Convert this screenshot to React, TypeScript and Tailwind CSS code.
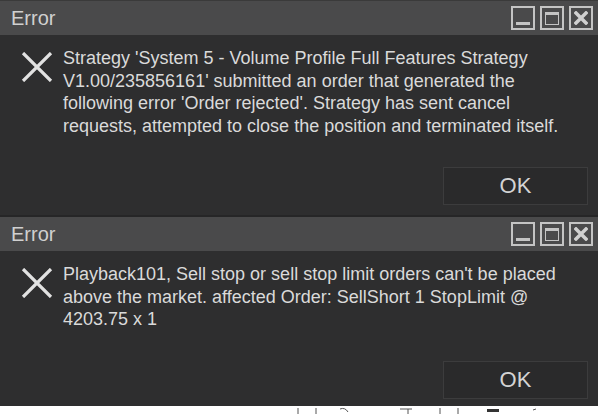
import { ReactNode } from 'react'

const TitleButtons = () => (
  <div className="flex gap-[5px] mr-[5px]">
    <div className="w-[24px] h-[24px] border-2 border-[#c4c4c4] flex items-end justify-center pb-[3px]">
      <div className="w-[14px] h-[3px] bg-[#c4c4c4]" />
    </div>
    <div className="w-[24px] h-[24px] border-2 border-[#c4c4c4] flex items-center justify-center">
      <div className="w-[14px] h-[13px] border border-t-[3px] border-[#c4c4c4]" />
    </div>
    <div className="w-[24px] h-[24px] border-2 border-[#c4c4c4] flex items-center justify-center">
      <svg width="14" height="14" viewBox="0 0 14 14">
        <path d="M2 2 L12 12 M12 2 L2 12" stroke="#d0d0d0" strokeWidth="3.5" strokeLinecap="square" />
      </svg>
    </div>
  </div>
)

const ErrorIcon = () => (
  <svg width="32" height="30" viewBox="0 0 32 30" className="shrink-0">
    <path d="M2 1 L30 29 M30 1 L2 29" stroke="#e2e2e2" strokeWidth="3.2" />
  </svg>
)

type DialogProps = {
  children: ReactNode
  bodyHeight: string
  okClass: string
}

const ErrorDialog = ({ children, bodyHeight, okClass }: DialogProps) => (
  <div className="flex flex-col bg-[#2e2e2f]">
    <div className="h-[34px] bg-[#4a4a4b] flex items-center justify-between">
      <span className="pl-[11px] text-[20px] text-[#d0d0d0] leading-none">Error</span>
      <TitleButtons />
    </div>
    <div className={`flex flex-col justify-between ${bodyHeight}`}>
      <div className="flex gap-[10px] pl-[21px] pt-[12px]">
        <div className="pt-[5px]">
          <ErrorIcon />
        </div>
        <p className="w-[524px] text-[18px] leading-[22.5px] text-[#dadada]">{children}</p>
      </div>
      <div className={`flex justify-end pr-[10px] ${okClass}`}>
        <button className="w-[145px] h-[38px] border border-[#3c3c3d] bg-[#2a2a2b] text-[22px] text-[#d4d4d4] leading-none">
          OK
        </button>
      </div>
    </div>
  </div>
)

const App = () => {
  return (
    <div
      className="w-[598px] h-[414px] bg-white flex flex-col overflow-hidden"
      style={{ fontFamily: '"Liberation Sans", Arial, sans-serif' }}
    >
      <div className="h-px bg-[#3a3a3a]" />
      <ErrorDialog bodyHeight="h-[180px]" okClass="pb-[10px]">
        Strategy 'System 5 - Volume Profile Full Features Strategy V1.00/235856161' submitted an order that
        generated the following error 'Order rejected'. Strategy has sent cancel requests, attempted to close the
        position and terminated itself.
      </ErrorDialog>
      <div className="h-[2px] bg-[#262627]" />
      <ErrorDialog bodyHeight="h-[155px]" okClass="pb-[7px]">
        Playback101, Sell stop or sell stop limit orders can't be placed above the market. affected Order:
        SellShort 1 StopLimit @ 4203.75 x 1
      </ErrorDialog>
      <div className="flex-1 relative">
        <svg width="598" height="8" viewBox="0 0 598 8" className="absolute left-0 top-0">
          <g stroke="#555" strokeWidth="1" fill="none">
            <path d="M298 2 V8 M316 2 V8 M340 3 Q345 1 348 6 M400 3 H412 M408 3 V8 M440 2 V8 M458 2 V8" />
          </g>
          <rect x="487" y="3" width="12" height="3" fill="#333" />
          <path d="M533 4 L536 3" stroke="#555" />
        </svg>
      </div>
    </div>
  )
}

export default App
